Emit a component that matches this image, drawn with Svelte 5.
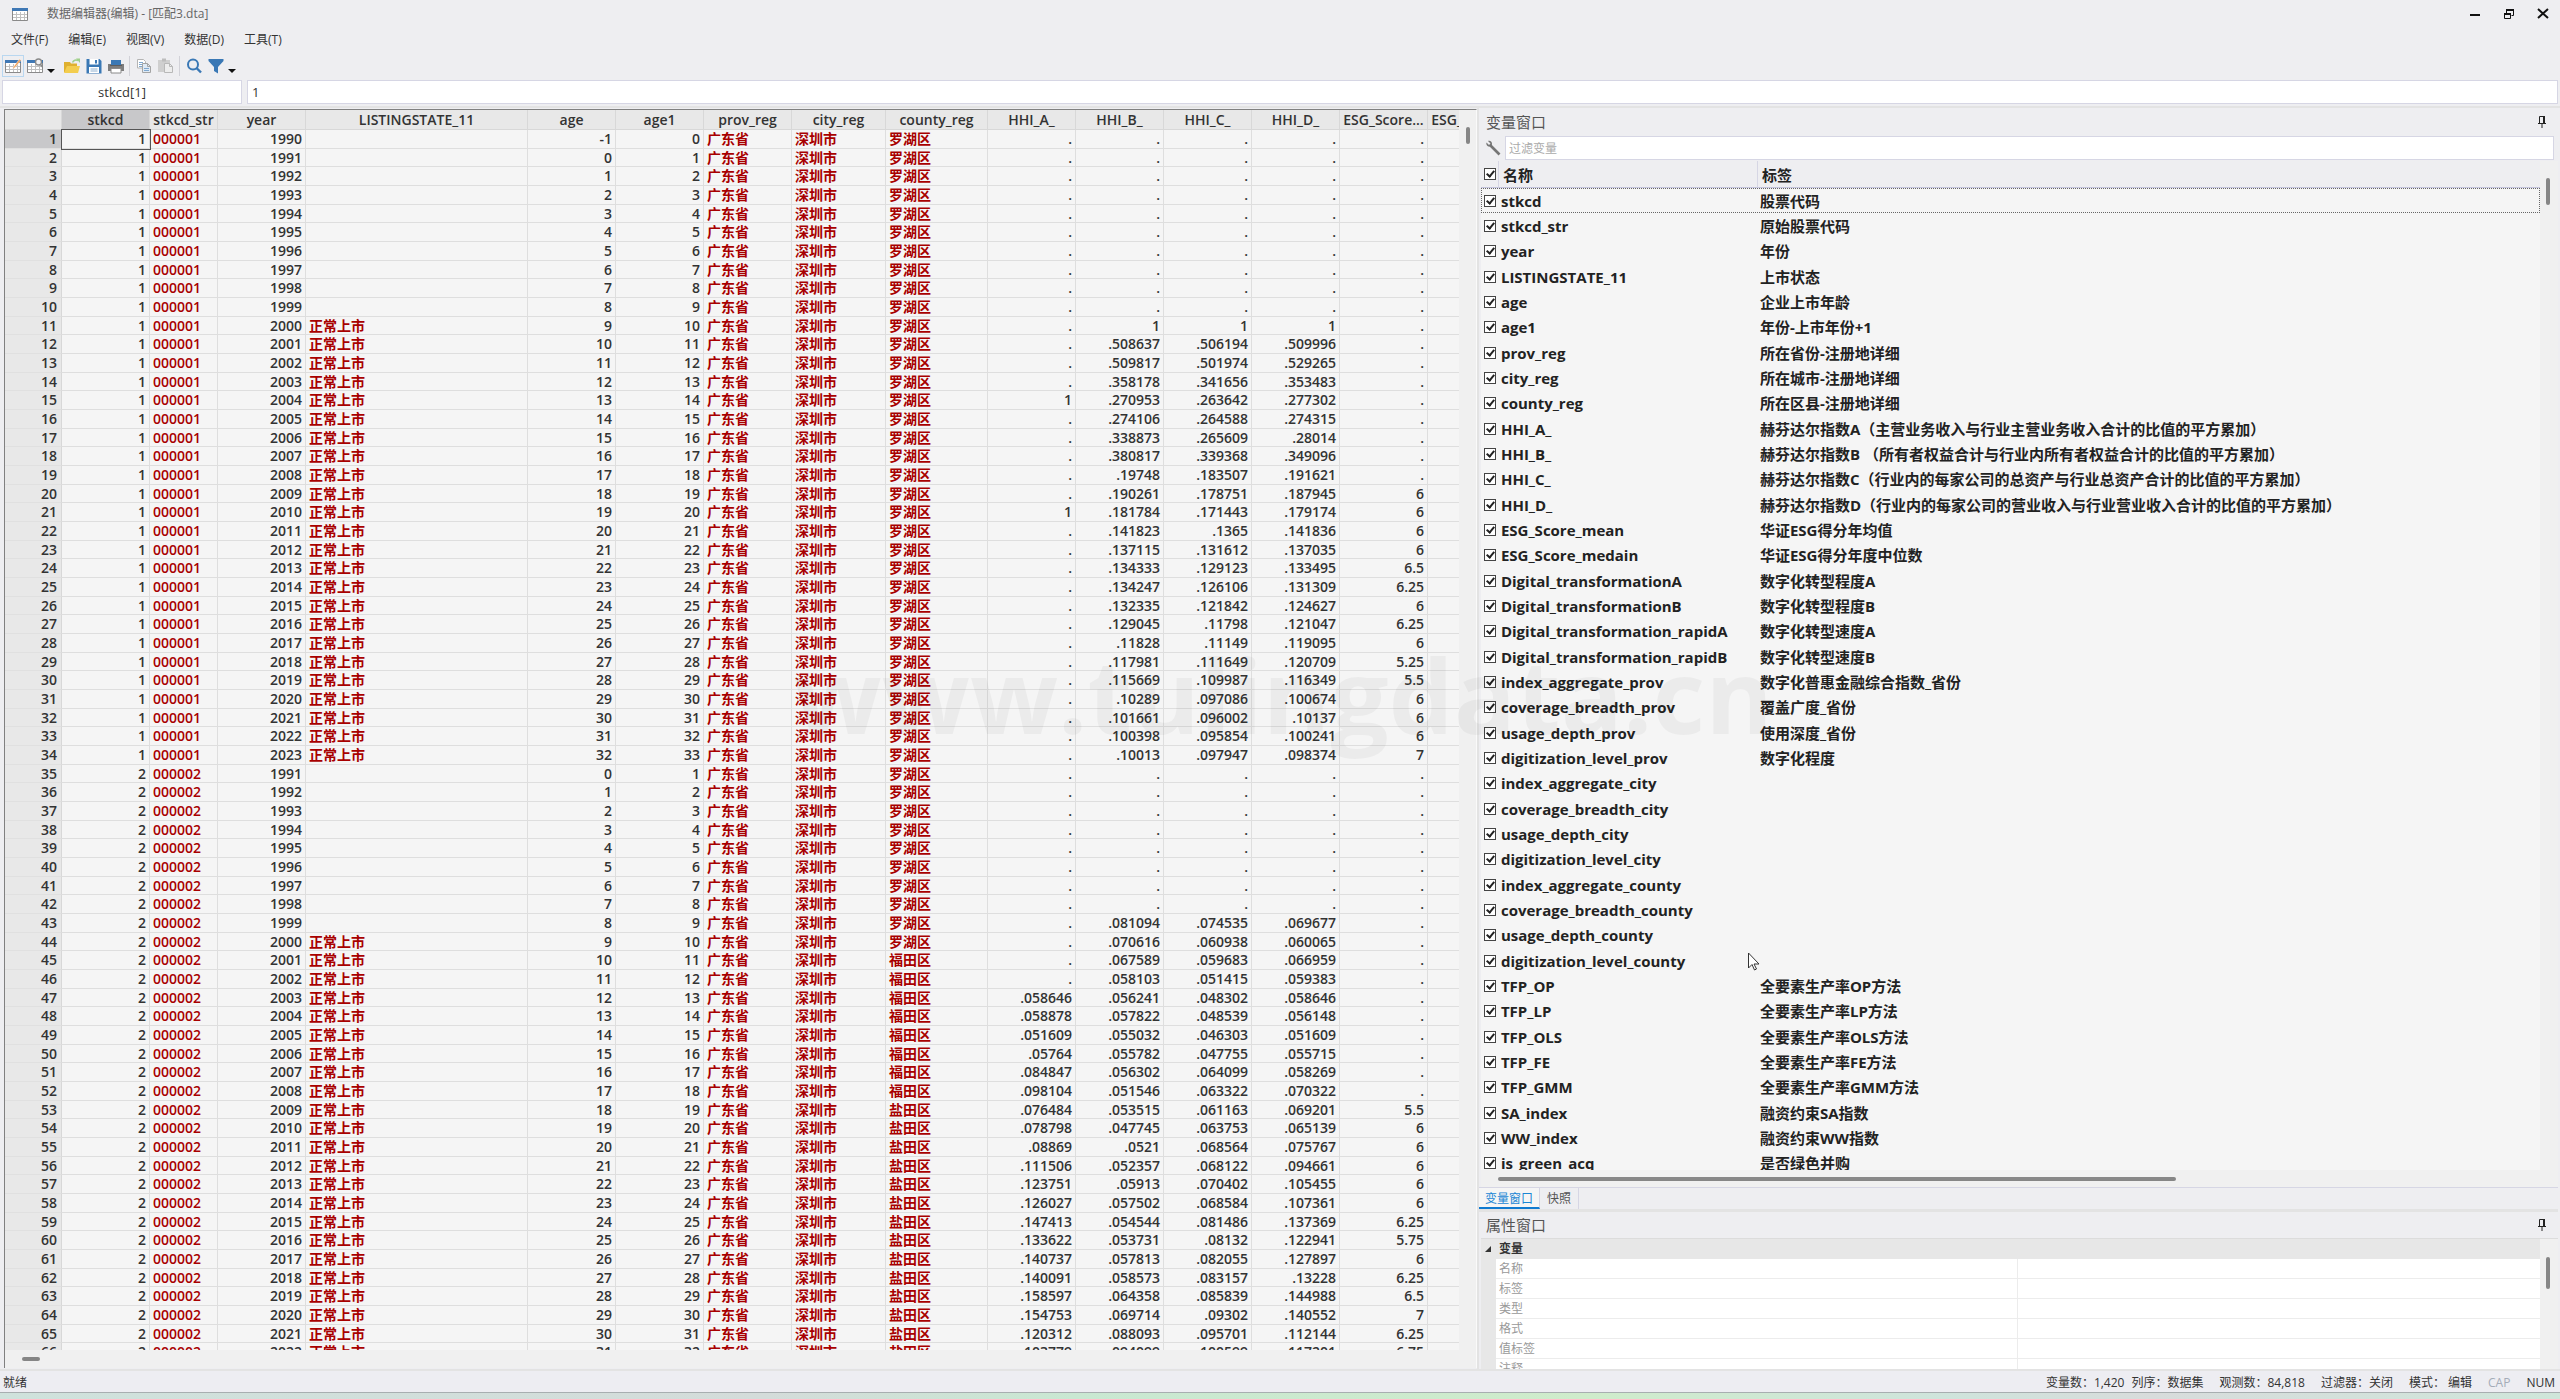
<script lang="ts">
	type Row = {
		n: number;
		id: number;
		year: number;
		county: string;
		nums: string[];
	};

	const menus = ['文件(F)', '编辑(E)', '视图(V)', '数据(D)', '工具(T)'];

	const columns = [
		{ name: 'stkcd', width: 88 },
		{ name: 'stkcd_str', width: 68 },
		{ name: 'year', width: 88 },
		{ name: 'LISTINGSTATE_11', width: 222 },
		{ name: 'age', width: 88 },
		{ name: 'age1', width: 88 },
		{ name: 'prov_reg', width: 88 },
		{ name: 'city_reg', width: 94 },
		{ name: 'county_reg', width: 102 },
		{ name: 'HHI_A_', width: 88 },
		{ name: 'HHI_B_', width: 88 },
		{ name: 'HHI_C_', width: 88 },
		{ name: 'HHI_D_', width: 88 },
		{ name: 'ESG_Score...', width: 88 },
		{ name: 'ESG_Score...', width: 88 }
	];

	// HHI_A_ .. HHI_D_ and ESG_Score_mean, keyed by company then first year listed
	const values: Record<number, { from: number; lines: string }> = {
		1: {
			from: 2000,
			lines: `. 1 1 1 .
. .508637 .506194 .509996 .
. .509817 .501974 .529265 .
. .358178 .341656 .353483 .
1 .270953 .263642 .277302 .
. .274106 .264588 .274315 .
. .338873 .265609 .28014 .
. .380817 .339368 .349096 .
. .19748 .183507 .191621 .
. .190261 .178751 .187945 6
1 .181784 .171443 .179174 6
. .141823 .1365 .141836 6
. .137115 .131612 .137035 6
. .134333 .129123 .133495 6.5
. .134247 .126106 .131309 6.25
. .132335 .121842 .124627 6
. .129045 .11798 .121047 6.25
. .11828 .11149 .119095 6
. .117981 .111649 .120709 5.25
. .115669 .109987 .116349 5.5
. .10289 .097086 .100674 6
. .101661 .096002 .10137 6
. .100398 .095854 .100241 6
. .10013 .097947 .098374 7`
		},
		2: {
			from: 1999,
			lines: `. .081094 .074535 .069677 .
. .070616 .060938 .060065 .
. .067589 .059683 .066959 .
. .058103 .051415 .059383 .
.058646 .056241 .048302 .058646 .
.058878 .057822 .048539 .056148 .
.051609 .055032 .046303 .051609 .
.05764 .055782 .047755 .055715 .
.084847 .056302 .064099 .058269 .
.098104 .051546 .063322 .070322 .
.076484 .053515 .061163 .069201 5.5
.078798 .047745 .063753 .065139 6
.08869 .0521 .068564 .075767 6
.111506 .052357 .068122 .094661 6
.123751 .05913 .070402 .105455 6
.126027 .057502 .068584 .107361 6
.147413 .054544 .081486 .137369 6.25
.133622 .053731 .08132 .122941 5.75
.140737 .057813 .082055 .127897 6
.140091 .058573 .083157 .13228 6.25
.158597 .064358 .085839 .144988 6.5
.154753 .069714 .09302 .140552 7
.120312 .088093 .095701 .112144 6.25
.103779 .094099 .100599 .117201 6.75`
		}
	};

	function countyOf(id: number, year: number) {
		if (id === 1 || year < 2001) return '罗湖区';
		return year < 2009 ? '福田区' : '盐田区';
	}

	const rows: Row[] = [];
	for (const [id, first, last] of [
		[1, 1990, 2023],
		[2, 1991, 2022]
	]) {
		const { from, lines } = values[id];
		const parsed = lines.split('\n').map((l) => l.trim().split(' '));
		for (let year = first; year <= last; year++) {
			rows.push({
				n: rows.length + 1,
				id,
				year,
				county: countyOf(id, year),
				nums: parsed[year - from] ?? ['.', '.', '.', '.', '.']
			});
		}
	}

	const variables = [
		['stkcd', '股票代码'],
		['stkcd_str', '原始股票代码'],
		['year', '年份'],
		['LISTINGSTATE_11', '上市状态'],
		['age', '企业上市年龄'],
		['age1', '年份-上市年份+1'],
		['prov_reg', '所在省份-注册地详细'],
		['city_reg', '所在城市-注册地详细'],
		['county_reg', '所在区县-注册地详细'],
		['HHI_A_', '赫芬达尔指数A（主营业务收入与行业主营业务收入合计的比值的平方累加）'],
		['HHI_B_', '赫芬达尔指数B （所有者权益合计与行业内所有者权益合计的比值的平方累加）'],
		['HHI_C_', '赫芬达尔指数C（行业内的每家公司的总资产与行业总资产合计的比值的平方累加）'],
		['HHI_D_', '赫芬达尔指数D（行业内的每家公司的营业收入与行业营业收入合计的比值的平方累加）'],
		['ESG_Score_mean', '华证ESG得分年均值'],
		['ESG_Score_medain', '华证ESG得分年度中位数'],
		['Digital_transformationA', '数字化转型程度A'],
		['Digital_transformationB', '数字化转型程度B'],
		['Digital_transformation_rapidA', '数字化转型速度A'],
		['Digital_transformation_rapidB', '数字化转型速度B'],
		['index_aggregate_prov', '数字化普惠金融综合指数_省份'],
		['coverage_breadth_prov', '覆盖广度_省份'],
		['usage_depth_prov', '使用深度_省份'],
		['digitization_level_prov', '数字化程度'],
		['index_aggregate_city', ''],
		['coverage_breadth_city', ''],
		['usage_depth_city', ''],
		['digitization_level_city', ''],
		['index_aggregate_county', ''],
		['coverage_breadth_county', ''],
		['usage_depth_county', ''],
		['digitization_level_county', ''],
		['TFP_OP', '全要素生产率OP方法'],
		['TFP_LP', '全要素生产率LP方法'],
		['TFP_OLS', '全要素生产率OLS方法'],
		['TFP_FE', '全要素生产率FE方法'],
		['TFP_GMM', '全要素生产率GMM方法'],
		['SA_index', '融资约束SA指数'],
		['WW_index', '融资约束WW指数'],
		['is_green_acq', '是否绿色并购']
	];

	const properties = ['名称', '标签', '类型', '格式', '值标签', '注释'];
</script>

{#snippet sheet()}
	<path d="M.5 3.500h15v11H.5z" fill="#fff" stroke="#8a8a8a" />
	<path d="M4.500 6v8M8.500 6v8M12.500 6v8M1 8.500h14M1 11.500h14" stroke="#c0c0c0" fill="none" />
	<path d="M0 2h16v3H0z" fill="#3f78b5" />
{/snippet}

{#snippet pin()}
	<button class="pin" aria-label="自动隐藏">
		<svg width="8" height="12" viewBox="0 0 8 12">
			<path d="M1.500 7V.5h4V7M0 7.500h8M4 8v4" fill="none" stroke="#222" />
			<path d="M5 0h2v7H5z" fill="#222" />
		</svg>
	</button>
{/snippet}

<div class="app">
	<header class="titlebar">
		<svg class="logo" width="16" height="16" viewBox="0 0 16 16">{@render sheet()}</svg>
		<h1>数据编辑器(编辑) - [匹配3.dta]</h1>
		<button aria-label="最小化">
			<svg width="12" height="12" viewBox="0 0 12 12"><path d="M1 7h10" stroke="#111" stroke-width="2" /></svg>
		</button>
		<button aria-label="还原">
			<svg width="12" height="12" viewBox="0 0 12 12">
				<path d="M3.500 5V2.500h7v5H8.500" fill="none" stroke="#111" />
				<path d="M3 1h8v2H3zM1 5h7v2H1z" fill="#111" />
				<path d="M1.500 5.500h6v5h-6z" fill="none" stroke="#111" />
			</svg>
		</button>
		<button aria-label="关闭">
			<svg width="12" height="12" viewBox="0 0 12 12"><path d="M1 1l10 9M11 1L1 10" stroke="#111" stroke-width="2" /></svg>
		</button>
	</header>

	<nav class="menubar">
		{#each menus as menu}<button>{menu}</button>{/each}
	</nav>

	<div class="toolbar">
		<button class="active" aria-label="编辑模式">
			<svg viewBox="0 0 16 16">
				{@render sheet()}
				<path d="M8 9.500L14.500 1l1.500 1.500L9.500 10 7.500 10.500z" fill="#f2a45c" stroke="#fff" stroke-width=".4" />
			</svg>
		</button>
		<button aria-label="浏览模式">
			<svg viewBox="0 0 16 16">
				{@render sheet()}
				<circle cx="11.500" cy="4" r="3" fill="#f4f4f6" stroke="#8a8a8a" stroke-width="1.400" />
				<path d="M13.500 6.500l2 2.500" stroke="#8a8a8a" stroke-width="1.600" />
			</svg>
		</button>
		<button class="drop" aria-label="浏览选项"><svg class="caret" viewBox="0 0 8 4"><path d="M0 0h8L4 4z" fill="#111" /></svg></button>
		<button aria-label="打开">
			<svg viewBox="0 0 16 16">
				<path d="M0 4h6l1 1.500h6V14H0z" fill="#dfb02f" />
				<path d="M3 8h13l-2 7H0z" fill="#f3cd4e" />
				<path d="M8.500 4.500c1-2.500 3.500-3 5.500-2" fill="none" stroke="#9fd08a" stroke-width="1.500" />
				<path d="M12 .5h4V5z" fill="#9fd08a" />
			</svg>
		</button>
		<button aria-label="保存">
			<svg viewBox="0 0 16 16">
				<path d="M.5 1h13L15.500 3v12.500H.5z" fill="#3a78b5" />
				<path d="M3.500 1h9v5.500h-9z" fill="#fff" />
				<path d="M9 2h2v3.500H9z" fill="#3a78b5" />
				<path d="M3 9h10v6H3z" fill="#fff" />
				<path d="M4.500 11h7M4.500 13h7" stroke="#8fb0d0" />
			</svg>
		</button>
		<button aria-label="打印">
			<svg viewBox="0 0 16 16">
				<path d="M0 6h16v7H0z" fill="#7d7d7d" />
				<path d="M3 2h10v5H3z" fill="#3a78b5" />
				<path d="M2 7.500h12" stroke="#5d5d5d" />
				<path d="M3 10.500h10V15H3z" fill="#fff" stroke="#8a8a8a" />
			</svg>
		</button>
		<span class="sep"></span>
		<button aria-label="复制">
			<svg viewBox="0 0 16 16">
				<path d="M1.500 1.500h6l2 2V10h-8z" fill="#fff" stroke="#b4b4b4" />
				<path d="M3 4.500h4M3 6.500h3M3 8.500h3" stroke="#7fa8d0" />
				<path d="M6.500 5.500h5l3 3v6h-8z" fill="#dfeaf5" stroke="#a4a4a4" />
				<path d="M11.500 5.500v3h3" fill="none" stroke="#a4a4a4" />
				<path d="M8 10.500h5M8 12.500h5" stroke="#7fa8d0" />
			</svg>
		</button>
		<button aria-label="粘贴">
			<svg viewBox="0 0 16 16">
				<path d="M0 2h12v12H0z" fill="#cfcfcf" />
				<path d="M4 .5h4v3H4z" fill="#bdbdbd" />
				<path d="M6.500 5.500h5l3 3v6h-8z" fill="#ededed" stroke="#b8b8b8" />
				<path d="M11.500 5.500v3h3" fill="none" stroke="#b8b8b8" />
			</svg>
		</button>
		<span class="sep"></span>
		<button aria-label="查找">
			<svg viewBox="0 0 16 16">
				<circle cx="7" cy="6.500" r="5" fill="none" stroke="#3a78b5" stroke-width="2" />
				<path d="M10.500 10l4.500 4.500" stroke="#3a78b5" stroke-width="2.400" />
			</svg>
		</button>
		<button aria-label="筛选">
			<svg viewBox="0 0 16 16"><path d="M.5 1h15v2L10 9v6.500L6 13V9L.5 3z" fill="#3a78b5" /></svg>
		</button>
		<button class="drop" aria-label="筛选选项"><svg class="caret" viewBox="0 0 8 4"><path d="M0 0h8L4 4z" fill="#111" /></svg></button>
	</div>

	<div class="formula">
		<input class="cellref" aria-label="单元格" value="stkcd[1]" />
		<input class="cellval" aria-label="值" value="1" />
	</div>

	<main>
		<section class="data">
			<div class="viewport">
				<table class="grid">
					<colgroup>
						<col style:width="57px" />
						{#each columns as col}<col style:width="{col.width}px" />{/each}
					</colgroup>
					<thead>
						<tr>
							<th></th>
							{#each columns as col, i}<th class:picked={i === 0}>{col.name}</th>{/each}
						</tr>
					</thead>
					<tbody>
						{#each rows as row (row.n)}
							<tr>
								<th class:picked={row.n === 1}>{row.n}</th>
								<td class:current={row.n === 1}>{row.id}</td>
								<td class="str">{String(row.id).padStart(6, '0')}</td>
								<td>{row.year}</td>
								<td class="str">{row.year < 2000 ? '' : '正常上市'}</td>
								<td>{row.year - 1991}</td>
								<td>{row.year - 1990}</td>
								<td class="str">广东省</td>
								<td class="str">深圳市</td>
								<td class="str">{row.county}</td>
								{#each row.nums as num}<td>{num}</td>{/each}
								<td></td>
							</tr>
						{/each}
					</tbody>
				</table>
			</div>
			<div class="vbar"><i></i></div>
			<div class="hbar"><i></i></div>
		</section>

		<aside>
			<section class="vars">
				<div class="panel-head"><h2>变量窗口</h2>{@render pin()}</div>
				<div class="filter">
					<svg width="16" height="16" viewBox="0 0 16 16">
						<path d="M5 5l9.500 9.500" stroke="#757575" stroke-width="2.600" />
						<path d="M1.500 2.500l2.500 2.500 1.500-1.500L3 1c2-.8 4.500.8 4 3.500L5 6.500C2.500 7 .8 4.500 1.500 2.500z" fill="#757575" />
					</svg>
					<input aria-label="过滤变量" placeholder="过滤变量" />
				</div>
				<div class="list">
					<div class="viewport">
						<table class="varlist">
							<colgroup><col class="check" /><col class="name" /><col /></colgroup>
							<thead>
								<tr>
									<th><input type="checkbox" checked aria-label="全选" /></th>
									<th>名称</th>
									<th>标签</th>
								</tr>
							</thead>
							<tbody>
								{#each variables as [name, label], i}
									<tr class:focused={i === 0}>
										<td><input type="checkbox" id="v-{name}" checked /></td>
										<td><label for="v-{name}">{name}</label></td>
										<td>{label}</td>
									</tr>
								{/each}
							</tbody>
						</table>
					</div>
					<div class="vbar"><i></i></div>
					<div class="hbar"><i></i></div>
				</div>
				<div class="tabs">
					<button class="on">变量窗口</button>
					<button>快照</button>
				</div>
			</section>

			<section class="props">
				<div class="panel-head"><h2>属性窗口</h2>{@render pin()}</div>
				<div class="list">
					<div class="viewport">
						<button class="group">
							<svg width="6" height="6" viewBox="0 0 6 6"><path d="M6 0v6H0z" fill="#333" /></svg>变量
						</button>
						<table>
							<tbody>
								{#each properties as prop}<tr><th>{prop}</th><td></td></tr>{/each}
							</tbody>
						</table>
					</div>
					<div class="vbar"><i></i></div>
				</div>
			</section>
		</aside>
	</main>

	<footer>
		<span class="ready">就绪</span>
		<span class="tight">变量数：1,420</span>
		<span>列序：数据集</span>
		<span>观测数：84,818</span>
		<span>过滤器：关闭</span>
		<span>模式： 编辑</span>
		<span class="off">CAP</span>
		<span>NUM</span>
	</footer>
	<div class="desktop"></div>

	<div class="watermark">www.tulingdata.cn</div>
	<svg class="cursor" width="12" height="19" viewBox="0 0 12 19">
		<path d="M.5 1v15l3.500-3.500 2.500 5.500 2-1-2.500-5h5z" fill="#fff" stroke="#333" />
	</svg>
</div>

<style>
	:global(body) {
		margin: 0;
	}
	.app {
		position: relative;
		display: flex;
		flex-direction: column;
		height: 100vh;
		overflow: hidden;
		background: #eeeef1;
		color: #333;
		font: 12px/16px 'Open Sans', 'Noto Sans CJK SC', sans-serif;
	}
	button {
		margin: 0;
		padding: 0;
		border: 0;
		background: none;
		color: inherit;
		font: inherit;
	}
	input {
		box-sizing: border-box;
		margin: 0;
		border: 1px solid #d6d6e4;
		border-radius: 0;
		background: #fff;
		color: #333;
		font: inherit;
	}
	table {
		width: 100%;
		table-layout: fixed;
		border-collapse: separate;
		border-spacing: 0;
	}
	th,
	td {
		box-sizing: border-box;
		padding: 0;
		white-space: nowrap;
	}
	h1,
	h2 {
		margin: 0;
		font-weight: 400;
	}

	/* title, menu, toolbar */
	.titlebar {
		display: flex;
		align-items: center;
		height: 27px;
		padding-left: 12px;
	}
	.titlebar h1 {
		flex: 1;
		margin-left: 19px;
		color: #666;
		font-size: 12px;
	}
	.titlebar button {
		display: grid;
		place-items: center;
		width: 34px;
		height: 27px;
	}
	.menubar {
		display: flex;
		height: 26px;
		padding-left: 1px;
	}
	.menubar button {
		padding: 0 10px;
	}
	.toolbar {
		display: flex;
		align-items: center;
		height: 25px;
		padding-left: 2px;
	}
	.toolbar button {
		display: grid;
		place-items: center;
		box-sizing: border-box;
		width: 22px;
		height: 22px;
	}
	.toolbar .active {
		border: 1px solid #b9d7f0;
	}
	.toolbar svg {
		width: 16px;
		height: 16px;
	}
	.toolbar .drop {
		align-items: end;
		width: 10px;
		margin-right: 5px;
		padding-bottom: 4px;
	}
	.toolbar .caret {
		width: 8px;
		height: 4px;
	}
	.sep {
		width: 1px;
		height: 20px;
		margin: 0 3px 0 2px;
		background: #d2d2d8;
	}
	.formula {
		display: flex;
		gap: 5px;
		padding: 2px;
	}
	.formula input {
		height: 24px;
		padding: 0 4px;
		font-size: 13px;
	}
	.cellref {
		width: 240px;
		text-align: center;
	}
	.cellval {
		flex: 1;
	}

	/* two docks */
	main {
		flex: 1;
		display: grid;
		grid-template-columns: 15fr 11fr;
		min-height: 0;
		border-top: 2px solid #e3e3e3;
		border-bottom: 2px solid #e3e3e3;
	}
	.viewport {
		min-width: 0;
		min-height: 0;
		overflow: hidden;
		background: #f5f5f5;
	}
	.data {
		display: grid;
		grid-template-columns: 1fr 17px;
		grid-template-rows: 1fr 18px;
		min-width: 0;
		min-height: 0;
		margin: 1px 0 1px 4px;
		border-top: 1px solid #808080;
		border-left: 1px solid #808080;
		border-right: 1px solid #fafafa;
		background: #f0f0f0;
	}
	.vbar i,
	.hbar i {
		display: block;
		border-radius: 2px;
		background: #868686;
	}
	.data .vbar i {
		width: 4px;
		height: 17px;
		margin: 17px 0 0 7px;
	}
	.data .hbar i {
		width: 18px;
		height: 4px;
		margin: 7px 0 0 17px;
	}

	.grid {
		width: 1442px;
		font-size: 14px;
		font-weight: 600;
		line-height: 17px;
		color: #333;
	}
	.grid th {
		border: solid #d8d8d8;
		border-width: 0 1px 1px 0;
		background: #e8e8e8;
		font-weight: 600;
	}
	.grid thead th {
		height: 20px;
	}
	.grid tbody th {
		padding-right: 4px;
		border-bottom-color: #e0e0e0;
		text-align: right;
		vertical-align: top;
	}
	.grid td {
		height: 19px;
		padding: 0 3px;
		border: solid #dedede;
		border-width: 0 1px 1px 0;
		text-align: right;
		vertical-align: top;
	}
	/* rows average 18⅔ px */
	.grid tbody tr:nth-child(3n + 2) td {
		height: 18px;
	}
	.grid td.str {
		color: #a80000;
		text-align: left;
	}
	.grid .picked {
		background: #c8c8ca;
	}
	.grid td.current {
		outline: 1px solid #555;
	}

	aside {
		display: flex;
		flex-direction: column;
		min-width: 0;
		min-height: 0;
		padding-right: 2px;
		border-left: 2px solid #e3e3e3;
	}
	.panel-head {
		display: flex;
		align-items: center;
		justify-content: space-between;
		height: 28px;
		padding: 0 12px 0 7px;
	}
	.panel-head h2 {
		color: #555;
		font-size: 15px;
	}
	.pin svg {
		display: block;
	}
	.vars {
		flex: 1;
		display: flex;
		flex-direction: column;
		min-height: 0;
		border-bottom: 3px solid #e3e3e3;
	}
	.filter {
		display: flex;
		align-items: center;
		gap: 4px;
		padding: 0 4px 1px 6px;
	}
	.filter input {
		flex: 1;
		height: 24px;
		padding: 0 3px;
	}
	.filter input::placeholder {
		color: #aaa;
	}
	.list {
		display: grid;
		grid-template-columns: 1fr 18px;
		min-height: 0;
		background: #f0f0f0;
	}
	.vars .list {
		flex: 1;
		grid-template-rows: minmax(0, 1fr) 17px;
		margin-left: 2px;
	}
	.vars .vbar i {
		width: 4px;
		height: 27px;
		margin: 17px 0 0 6px;
	}
	.vars .hbar i {
		width: 64%;
		height: 4px;
		margin: 7px 0 0 17px;
	}
	.check {
		width: 18px;
	}
	.name {
		width: 259px;
	}
	.varlist {
		color: #222;
		font-size: 15px;
		font-weight: 700;
		line-height: 20px;
	}
	.varlist th {
		height: 27px;
		border-bottom: 1px solid #c4c4dc;
		border-right: 1px solid #d6d6e4;
		background: #eeeef1;
		text-align: left;
	}
	.varlist th + th {
		padding: 1px 0 0 4px;
	}
	.varlist th:last-child {
		border-right: 0;
	}
	.varlist td {
		height: 25px;
	}
	.varlist tr:nth-child(3n) td {
		height: 26px;
	}
	.varlist td + td {
		padding-left: 2px;
	}
	.varlist .focused {
		outline: 1px dotted #666;
		outline-offset: -1px;
	}
	.varlist input {
		appearance: none;
		display: block;
		width: 12px;
		height: 12px;
		margin-left: 3px;
		border: 1px solid #444;
	}
	.varlist input:checked::before {
		content: '';
		display: block;
		width: 3px;
		height: 6px;
		margin: 0 0 0 3px;
		border: solid #222;
		border-width: 0 2px 2px 0;
		transform: rotate(40deg);
	}
	.tabs {
		display: flex;
		height: 21px;
		border-top: 1px solid #d6d6e4;
	}
	.tabs button {
		padding: 0 7px;
		border-right: 1px solid #d6d6e4;
		color: #555;
	}
	.tabs .on {
		padding: 2px 6px 0;
		border-bottom: 2px solid #0f7ad0;
		background: #f5f5f5;
		color: #1a86d4;
	}

	.props {
		display: flex;
		flex-direction: column;
		height: 157px;
	}
	.props .panel-head {
		height: 26px;
	}
	.props .list {
		flex: 1;
		border-top: 1px solid #dcdcdc;
		margin-left: 2px;
	}
	.props .viewport {
		background: #e7e7e7;
	}
	.group {
		display: flex;
		align-items: center;
		gap: 8px;
		height: 20px;
		padding-left: 4px;
		font-weight: 700;
	}
	.props table {
		width: auto;
		min-width: calc(100% - 15px);
		margin-left: 15px;
		background: #fff;
	}
	.props th,
	.props td {
		width: 50%;
		height: 20px;
		border-bottom: 1px solid #ececec;
	}
	.props th {
		padding: 1px 0 0 3px;
		border-right: 1px solid #ececec;
		color: #999;
		font-weight: 400;
		text-align: left;
	}
	.props .vbar i {
		width: 4px;
		height: 32px;
		margin: 18px 0 0 6px;
	}

	footer {
		display: flex;
		align-items: center;
		gap: 16px;
		height: 19px;
		padding: 2px 5px 0 3px;
		border-bottom: 1px solid #a8aeb0;
		background: #ededf2;
	}
	.ready {
		margin-right: auto;
	}
	.tight {
		margin-right: -9px;
	}
	.off {
		color: #a4acb8;
	}
	.desktop {
		height: 6px;
		background: linear-gradient(90deg, #cfe2dc, #d4dcda 30%, #c9e8d2 42%, #cfeccb 62%, #cfe4dc 76%, #d8dcdc 84%, #cfe6da);
	}

	/* overlays */
	.watermark {
		position: absolute;
		top: 46%;
		left: 31%;
		color: rgba(0, 0, 0, 0.04);
		font-size: 103px;
		font-weight: 700;
		line-height: 100px;
		pointer-events: none;
	}
	.cursor {
		position: absolute;
		top: 952px;
		left: 1748px;
		pointer-events: none;
	}
</style>
